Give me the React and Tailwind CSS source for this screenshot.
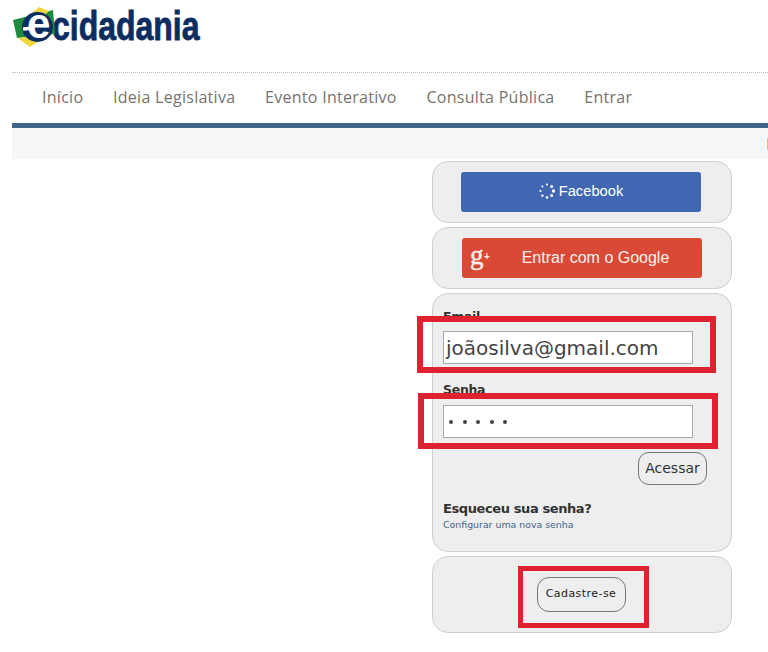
const navItems = ["Início", "Ideia Legislativa", "Evento Interativo", "Consulta Pública", "Entrar"];

function Logo() {
  return (
    <div className="flex h-[72px] items-start">
      <div className="relative z-10 h-[50px] w-[44px] shrink-0">
        <svg width="44" height="50" viewBox="0 0 44 50" className="absolute left-0 top-0">
          <polygon points="1,20 41,10 43,34 5,38" fill="#1f8a3d" />
          <polygon points="20,13 27,7 37,11 32,16" fill="#f1d53c" />
          <polygon points="6,38 36,35 18,47" fill="#f1d53c" />
          <ellipse cx="25.5" cy="27" rx="15.5" ry="15" fill="#0b2d60" />
          <path d="M11 29 L22 28" stroke="#fff" strokeWidth="3.5" />
        </svg>
        <span className="absolute left-[15px] top-[-1px] font-['Liberation_Sans',sans-serif] text-[42px] font-bold leading-[50px] text-white">e</span>
      </div>
      <span className="ml-[-4px] mt-[4px] inline-block origin-left scale-x-[0.78] font-['Liberation_Sans',sans-serif] text-[41px] font-bold leading-[44px] text-[#0b2d60] [-webkit-text-stroke:0.8px_#0b2d60]">cidadania</span>
    </div>
  );
}

function Panel({ className = "", children }) {
  return <div className={`w-[300px] rounded-[16px] border border-[#cfcfcf] bg-[#eeeeee] ${className}`}>{children}</div>;
}

export default function App() {
  return (
    <div className="relative h-[652px] w-[768px] overflow-hidden bg-white pl-3 font-['DejaVu_Sans',sans-serif]">
      <Logo />
      <div className="border-t border-dotted border-[#b8b8b8]" />
      <nav className="flex h-[50px] items-center gap-[29.7px] pb-[2px] pl-[30px] font-['Open_Sans',sans-serif] text-[16px] tracking-[0.28px] text-[#77736c]">
        {navItems.map((n) => (
          <span key={n}>{n}</span>
        ))}
      </nav>
      <div className="h-[5px] bg-[#3f6689]" />
      <div className="relative h-[31px] bg-[#f6f6f6]">
        <div className="absolute right-0 top-[10px] h-[12px] w-px bg-[#f0b888]" />
      </div>

      <div className="ml-[420px] mt-[2px] flex w-[300px] flex-col gap-[4px]">
        <Panel className="flex h-[62px] justify-center pt-[10px]">
          <div className="mr-[2px] flex h-[40px] w-[240px] items-center justify-center gap-[4px] rounded-[3px] bg-[#4267b2] pb-[2px] font-['Liberation_Sans',sans-serif] text-[14.7px] text-white">
            <svg width="16" height="16" viewBox="0 0 16 16" fill="#fff">
              <circle cx="8" cy="1.5" r="1.1" />
              <circle cx="12.6" cy="3.4" r="1.5" />
              <circle cx="14.5" cy="8" r="1.7" />
              <circle cx="12.6" cy="12.6" r="1.5" />
              <circle cx="8" cy="14.5" r="1.3" />
              <circle cx="3.4" cy="12.6" r="1.2" />
              <circle cx="1.5" cy="8" r="1.1" />
              <circle cx="3.4" cy="3.4" r="1" />
            </svg>
            <span>Facebook</span>
          </div>
        </Panel>

        <Panel className="flex h-[62px] justify-center pt-[10px]">
          <div className="relative flex h-[40px] w-[240px] items-center justify-center rounded-[3px] bg-[#d94a36] pl-[27px] font-['Liberation_Sans',sans-serif] text-[16px] text-[#fdf0ed]">
            <span className="absolute left-[8px] top-[4px] font-['Liberation_Serif',serif] text-[27px] leading-[26px] [-webkit-text-stroke:0.4px_#fdf0ed]">g</span>
            <span className="absolute left-[22px] top-[13px] text-[10px] font-bold leading-[12px]">+</span>
            <span>Entrar com o Google</span>
          </div>
        </Panel>

        <Panel className="h-[259px] px-[10px] pt-[15px]">
          <label className="block text-[12.5px] font-bold leading-[16px] tracking-[-0.3px] text-[#333]">Email</label>
          <div className="mt-[6px] flex h-[33px] w-[250px] items-center border border-[#a9a9a9] bg-white px-[2px] text-[20px] text-[#444]">joãosilva@gmail.com</div>
          <label className="mt-[18px] block text-[12.5px] font-bold leading-[16px] tracking-[-0.3px] text-[#333]">Senha</label>
          <div className="mt-[7px] flex h-[33px] w-[250px] items-center gap-[9.5px] border border-[#a9a9a9] bg-white pl-[5px]">
            {[0, 1, 2, 3, 4].map((i) => (
              <span key={i} className="h-[4px] w-[4px] rounded-full bg-[#444]" />
            ))}
          </div>
          <div className="mt-[14px] flex justify-end pr-[14px]">
            <button className="h-[33px] w-[69px] rounded-[11px] border border-[#767676] bg-[#eeeeee] text-[14px] text-[#333]">Acessar</button>
          </div>
          <p className="mt-[14px] text-[13px] font-bold leading-[20px] tracking-[-0.4px] text-[#333]">Esqueceu sua senha?</p>
          <a className="-mt-[1px] block text-[9.4px] leading-[13px] text-[#3f6689]">Configurar uma nova senha</a>
        </Panel>

        <Panel className="flex h-[77px] justify-center pt-[20px]">
          <button className="mr-[2px] h-[35px] w-[89px] rounded-[12px] border border-[#767676] bg-[#eeeeee] text-[11px] tracking-[0.45px] text-[#222]">Cadastre-se</button>
        </Panel>
      </div>

      <div className="pointer-events-none absolute left-[417px] top-[316px] h-[57px] w-[299px] border-[6px] border-[#df2230]" />
      <div className="pointer-events-none absolute left-[418px] top-[393px] h-[56px] w-[300px] border-[6px] border-[#df2230]" />
      <div className="pointer-events-none absolute left-[518px] top-[566px] h-[62px] w-[131px] border-[5px] border-[#df2230]" />
    </div>
  );
}
